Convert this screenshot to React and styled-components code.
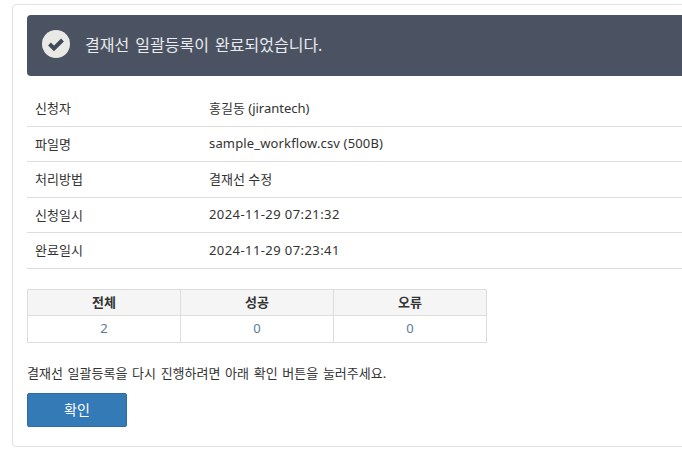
import React from "react";
import styled, { createGlobalStyle } from "styled-components";

const GlobalStyle = createGlobalStyle`
  html, body {
    margin: 0;
    padding: 0;
    background: #fff;
    overflow: hidden;
  }
  body {
    font-family: "Noto Sans", "Noto Sans CJK KR", sans-serif;
    font-size: 13px;
    color: #333;
  }
`;

const Page = styled.div`
  width: 682px;
  height: 460px;
  overflow: hidden;
  padding: 4px 0 0 12px;
  box-sizing: border-box;
`;

const Panel = styled.div`
  width: 720px;
  height: 443px;
  box-sizing: border-box;
  border: 1px solid #e1e1e4;
  border-radius: 4px;
  padding: 10px 14px;
`;

const Alert = styled.div`
  display: flex;
  align-items: center;
  gap: 15px;
  height: 61px;
  box-sizing: border-box;
  padding: 0 0 3px 15px;
  background: #4b5362;
  border-radius: 4px;
  color: #e9ebee;
  font-size: 16px;
  word-spacing: 2px;
`;

const InfoList = styled.div`
  margin-top: 15px;
`;

const InfoRow = styled.div`
  display: flex;
  align-items: center;
  height: ${(p) => p.$h}px;
  box-sizing: border-box;
  padding-bottom: 2px;
  border-bottom: 1px solid #dddddd;
`;

const InfoLabel = styled.div`
  width: 182px;
  padding-left: 8px;
  box-sizing: border-box;
`;

const InfoValue = styled.div`
  letter-spacing: ${(p) => p.$spacing}px;
`;

const Summary = styled.table`
  margin-top: 20px;
  width: 460px;
  border-collapse: collapse;
  table-layout: fixed;
  text-align: center;
`;

const HeadCell = styled.th`
  height: 26px;
  padding: 0 0 3px;
  box-sizing: border-box;
  border: 1px solid #dddddd;
  background: #f5f5f5;
  font-weight: 700;
  color: #333;
`;

const CountCell = styled.td`
  height: 27px;
  padding: 0 0 2px;
  box-sizing: border-box;
  border: 1px solid #dddddd;
  color: #5c7a9e;
`;

const Guide = styled.p`
  margin: 21px 0 0;
  line-height: 18px;
  word-spacing: 1.3px;
`;

const ConfirmButton = styled.button`
  display: block;
  margin-top: 11px;
  width: 100px;
  height: 34px;
  padding: 0 0 3px;
  border: 1px solid #2e6da4;
  border-radius: 2px;
  background: #337ab7;
  color: #fff;
  font-family: inherit;
  font-size: 14px;
`;

const CheckIcon = () => (
  <svg width="28" height="28" viewBox="0 0 28 28">
    <circle cx="14" cy="14" r="14" fill="#e9e9e6" />
    <path d="M7.5 14l4.5 4.5 8.5-8.5" fill="none" stroke="#414a59" strokeWidth="4" />
  </svg>
);

const rows = [
  ["신청자", "홍길동 (jirantech)", 36, 0],
  ["파일명", "sample_workflow.csv (500B)", 35, 0.15],
  ["처리방법", "결재선 수정", 36, 0],
  ["신청일시", "2024-11-29 07:21:32", 35, 0.42],
  ["완료일시", "2024-11-29 07:23:41", 36, 0.42],
];

export default function App() {
  return (
    <>
      <GlobalStyle />
      <Page>
        <Panel>
          <Alert>
            <CheckIcon />
            <span>결재선 일괄등록이 완료되었습니다.</span>
          </Alert>
          <InfoList>
            {rows.map(([label, value, h, spacing]) => (
              <InfoRow key={label} $h={h}>
                <InfoLabel>{label}</InfoLabel>
                <InfoValue $spacing={spacing}>{value}</InfoValue>
              </InfoRow>
            ))}
          </InfoList>
          <Summary>
            <thead>
              <tr>
                <HeadCell>전체</HeadCell>
                <HeadCell>성공</HeadCell>
                <HeadCell>오류</HeadCell>
              </tr>
            </thead>
            <tbody>
              <tr>
                <CountCell>2</CountCell>
                <CountCell>0</CountCell>
                <CountCell>0</CountCell>
              </tr>
            </tbody>
          </Summary>
          <Guide>결재선 일괄등록을 다시 진행하려면 아래 확인 버튼을 눌러주세요.</Guide>
          <ConfirmButton>확인</ConfirmButton>
        </Panel>
      </Page>
    </>
  );
}
